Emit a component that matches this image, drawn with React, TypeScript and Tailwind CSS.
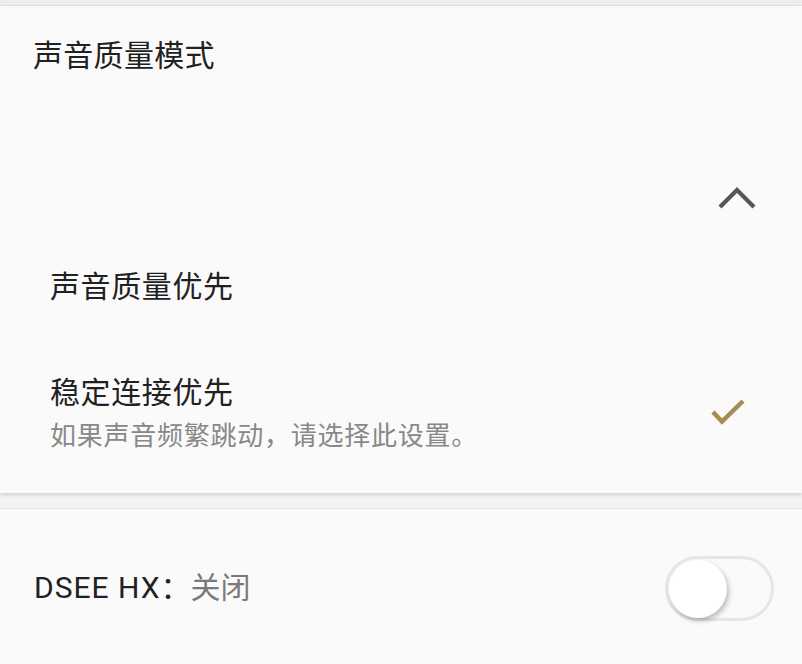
import React from "react";

export default function App() {
  return (
    <div className="w-[802px] h-[664px] overflow-hidden bg-[#fafafa] font-['Roboto','Noto_Sans_CJK_SC',sans-serif] text-[#212121]">
      <div className="h-[6px] bg-[#eeeeee] border-b border-[#e2e2e2]" />
      <div className="relative z-10 h-[487px] bg-[#fafafa] shadow-[0_2px_4px_rgba(0,0,0,0.14)]">
        <div className="h-[100px] flex items-center pl-[33px] text-[30px] leading-[36px] tracking-[0.3px]">
          声音质量模式
        </div>
        <div className="mt-[70px] h-[46px] flex items-center justify-end pr-[46px]">
          <svg width="38" height="26" viewBox="0 0 38 26" fill="none">
            <path d="M2 21 L19 4 L36 21" stroke="#575757" strokeWidth="4.2" strokeLinejoin="miter" />
          </svg>
        </div>
        <div className="mt-[35px] h-[60px] flex items-center pl-[50px] text-[30px] leading-[36px] tracking-[0.6px]">
          声音质量优先
        </div>
        <div className="mt-[58px] flex items-center justify-between pl-[50px] pr-[56px]">
          <div className="flex flex-col">
            <div className="text-[30px] leading-[36px] tracking-[0.6px]">稳定连接优先</div>
            <div className="mt-[10px] text-[26px] leading-[30px] tracking-[0.75px] text-[#888888]">
              如果声音频繁跳动，请选择此设置。
            </div>
          </div>
          <svg width="36" height="28" viewBox="0 0 36 28" fill="none">
            <path d="M3 13 L12 22.5 L33 2" stroke="#a68c50" strokeWidth="4.5" />
          </svg>
        </div>
      </div>
      <div className="h-[16px] bg-[#f3f3f3] border-b border-[#e4e4e4]" />
      <div className="h-[158px] flex items-center justify-between pl-[34px] pr-[28px]">
        <div className="text-[30px] leading-[36px]">
          <span className="text-[#212121] tracking-[1px]">DSEE HX</span>
          <span className="text-[#212121]">：</span>
          <span className="text-[#7a7a7a]">关闭</span>
        </div>
        <div className="relative w-[109px] h-[65px] rounded-full border-[3px] border-[#e6e6e6] bg-[#fafafa]">
          <div className="absolute left-[1px] top-[1px] w-[58px] h-[58px] rounded-full bg-white shadow-[2px_3px_5px_rgba(0,0,0,0.25)]" />
        </div>
      </div>
    </div>
  );
}
